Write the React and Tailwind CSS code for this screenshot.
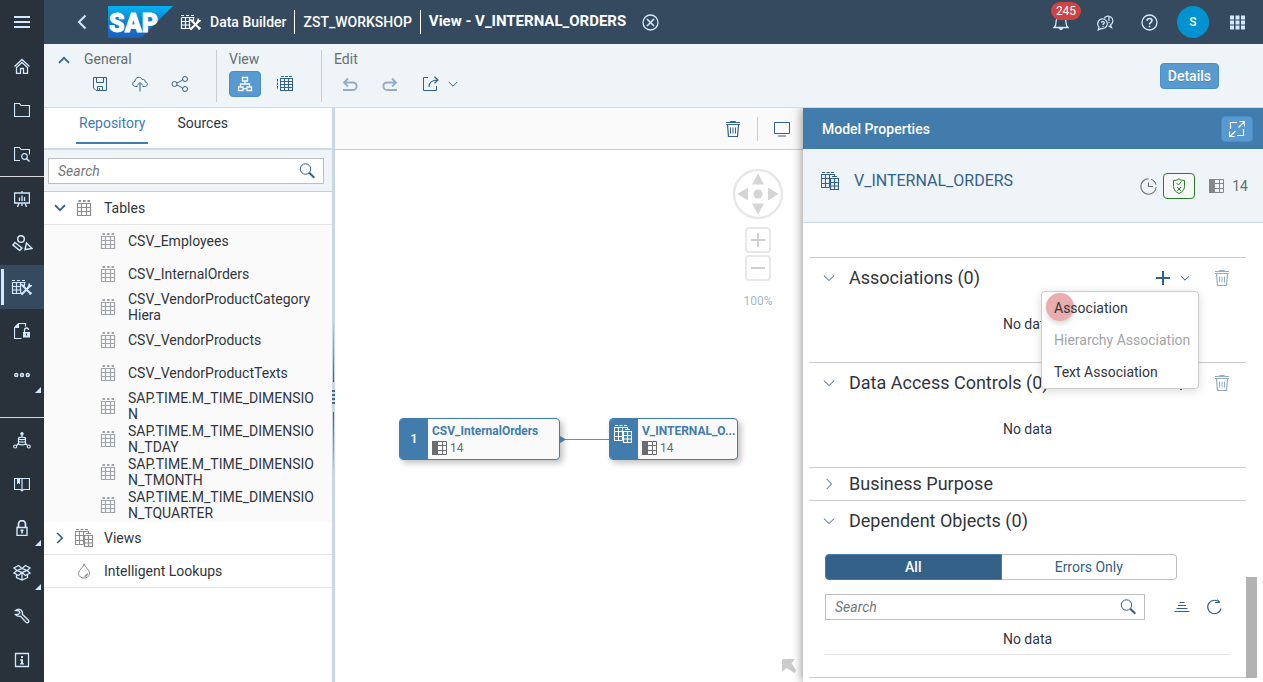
import { useState } from 'react';

function Icon({ w = 16, h = 16, className = '', children }) {
  return (
    <svg
      width={w}
      height={h}
      viewBox={`0 0 ${w} ${h}`}
      fill="none"
      stroke="currentColor"
      className={`shrink-0 ${className}`}
      aria-hidden="true"
    >
      {children}
    </svg>
  );
}

const MenuIcon = () => (
  <Icon>
    <path d="M0 3h16M0 8h16M0 13h16" strokeWidth="2" />
  </Icon>
);
const HomeIcon = () => (
  <Icon>
    <path d="M.5 8.500 8 1.500l7.500 7M2.500 9.500 8 4.500l5.500 5M2.500 9v6.500h4v-5h3v5h4V9" strokeWidth="1.300" />
  </Icon>
);
const FolderIcon = () => (
  <Icon>
    <path d="M.5 14.500v-13h5l1.500 2h8.500v11z" strokeWidth="1.200" />
  </Icon>
);
const FolderSearchIcon = () => (
  <Icon>
    <path d="M6 14.500H.500v-13h5l1.500 2h8.500v5" strokeWidth="1.200" />
    <circle cx="10.500" cy="10.500" r="2.800" strokeWidth="1.200" />
    <path d="m12.500 12.500 3 3" strokeWidth="1.500" />
  </Icon>
);
const BoardIcon = () => (
  <Icon>
    <path d="M.5 2h15v10H.500zM8 0v2.500M5 12l-1.500 4M11 12l1.500 4M8 12v3" strokeWidth="1.400" />
    <path d="M5.500 6.500V10M8 4.500V10M10.500 6v4" strokeWidth="1.300" />
  </Icon>
);
const ShapesIcon = () => (
  <Icon w={21} h={16}>
    <circle cx="9" cy="4" r="3.300" strokeWidth="1.500" />
    <path d="m3 7.500 7 5.500-2.200 2.500L1 10z" strokeWidth="1.500" />
    <path d="m14.500 8 5.500 5.500-7 1z" strokeWidth="1.500" />
  </Icon>
);
const BuilderIcon = () => (
  <Icon w={22} h={17}>
    <path d="M1 1.500h3M6 1.500h3M11 1.500h3M1.500 3.500h13M1.500 3.500v11h8M5.500 3.500v11M9.500 3.500v11M13.500 3.500V7M1.500 7.500H10M1.500 11h9" strokeWidth="1.200" />
    <path d="m11.500 6.500 8.500 8.500M10.500 15.500l9-9" strokeWidth="2" />
    <path d="M10 5.500 13 7M18.500 4.500l-1 3 3.500-1M9.500 13.500l2 2M18.500 15.500l2-2" strokeWidth="1.500" />
  </Icon>
);
const DocLockIcon = () => (
  <Icon>
    <path d="M7.500 15.500h-7V4.500l4-4h7v3M4.500.500v4h-4" strokeWidth="1.200" />
    <path d="M1 4 4 1v3z" fill="currentColor" />
    <path d="M9 9h7v5.500H9z" fill="currentColor" stroke="none" />
    <path d="M10.500 9V7a2 2 0 0 1 4 0" strokeWidth="1.300" />
    <path d="M12.500 10.500v2" className="stroke-[#29313a]" />
  </Icon>
);
const DotsIcon = () => (
  <Icon>
    <circle cx="2.200" cy="8" r="1.500" strokeWidth="1.500" />
    <circle cx="8" cy="8" r="1.500" strokeWidth="1.500" />
    <circle cx="13.800" cy="8" r="1.500" strokeWidth="1.500" />
  </Icon>
);
const DataNetIcon = () => (
  <Icon w={18} h={17}>
    <circle cx="9" cy="1.800" r="1.300" fill="currentColor" />
    <path d="M9 3v2M5.500 6.500c0-1.800 7-1.800 7 0v5c0 1.800-7 1.800-7 0zM5.500 6.500c0 1.500 7 1.500 7 0M5.500 9c0 1.500 7 1.500 7 0M5.500 11.500l-2 2M12.500 11.500l2 2" strokeWidth="1.200" />
    <circle cx="2.200" cy="14.500" r="1.500" strokeWidth="1.200" />
    <circle cx="15.800" cy="14.500" r="1.500" strokeWidth="1.200" />
  </Icon>
);
const BookIcon = () => (
  <Icon>
    <path d="M.5 2.500h15v11H9.500L8 15l-1.500-1.500h-6zM8 3v11" strokeWidth="1.200" />
    <path d="M3 3h3v5.500L4.500 7 3 8.500z" fill="currentColor" stroke="none" />
  </Icon>
);
const LockIcon = () => (
  <Icon>
    <path d="M3 7.500h10v8H3z" strokeWidth="1.400" />
    <path d="M4.500 7.500V4a3.500 3.500 0 0 1 7 0v3.500" strokeWidth="1.800" />
    <path d="M6.500 9.500h3v1.500l-.7.500v2h-1.600v-2l-.7-.5z" fill="currentColor" stroke="none" />
  </Icon>
);
const BoxIcon = () => (
  <Icon w={18} h={17}>
    <path
      d="M9 4.500 5.500 1.500 1 4l3 2.500zM9 4.500l3.500-3L17 4l-3 2.500zM4 6.500 1 9l4.500 2.500L9 8.500zM14 6.500 17 9l-4.500 2.500L9 8.500zM4 6.500l5-2 5 2-5 2zM3.500 10.500v3L9 16l5.500-2.500v-3M9 9v7"
      strokeWidth="1.300"
    />
  </Icon>
);
const WrenchIcon = () => (
  <Icon>
    <path
      d="M1.500 2.500c2-1.800 4.500-1.800 6 0 1 1.200 1.200 2.500.8 3.800l6.200 6c1 1.500-.8 3.200-2.200 2.200L6.500 8.200c-1.800.5-3.500 0-5-1.700l3-.3 1.300-1.500-1-2z"
      strokeWidth="1.400"
    />
  </Icon>
);
const InfoIcon = () => (
  <Icon>
    <path d="M1.500 1.500h13v13h-13z" strokeWidth="1.300" />
    <path d="M7 4h2v2H7zM6 7.200h3v4h1v1.300H6v-1.300h1V8.500H6z" fill="currentColor" stroke="none" />
  </Icon>
);
const ChevronLeft = () => (
  <Icon w={10} h={16}>
    <path d="M8.500 1.500 2 8l6.500 6.500" strokeWidth="2" />
  </Icon>
);
const Down = ({ className }) => (
  <Icon w={12} h={8} className={className}>
    <path d="m.8 1.500 5.200 5 5.200-5" />
  </Icon>
);
const DownBold = ({ className }) => (
  <Icon w={12} h={8} className={className}>
    <path d="m1 1.200 5 5 5-5" strokeWidth="1.700" />
  </Icon>
);
const DownSmall = ({ className }) => (
  <Icon w={10} h={7} className={className}>
    <path d="m.8 1 4.200 4.200L9.200 1" />
  </Icon>
);
const CloseCircle = () => (
  <Icon w={17} h={17}>
    <circle cx="8.500" cy="8.500" r="7.500" strokeWidth="1.300" />
    <path d="m5 5 7 7M12 5l-7 7" strokeWidth="1.600" />
  </Icon>
);
const BellIcon = () => (
  <Icon>
    <path d="M1 13.500c1.500-1 2-2.500 2-5C3 5 5 2.500 8 2.500s5 2.500 5 6c0 2.500.5 4 2 5z" strokeWidth="1.300" />
    <path d="M5.500 14h5L9 16H7z" fill="currentColor" stroke="none" />
  </Icon>
);
const FeedbackIcon = () => (
  <Icon w={17} h={17}>
    <path
      d="M7 4.500a4.700 4.700 0 1 1 6.500 6.300l1 2.700-3-1.800M6 5a4.800 4.800 0 1 1-1.800 9.400L1.200 16l.8-3A4.800 4.800 0 0 1 6 5z"
      strokeWidth="1.200"
    />
    <path d="M4.500 8.800c.2-1.800 3-1.600 2.800 0-.1 1-1.300 1-1.300 2.200M6 12v1M12 3v4M12 8v1" strokeWidth="1.300" />
  </Icon>
);
const HelpIcon = () => (
  <Icon w={17} h={17}>
    <circle cx="8.500" cy="8.500" r="7.500" strokeWidth="1.300" />
    <path d="M6 6.800c.1-3 5-3 5-.2 0 1.800-2.500 1.700-2.500 3.900M8.500 11.700v1.600" strokeWidth="1.700" />
  </Icon>
);
const AppsIcon = () => (
  <Icon w={15} h={15}>
    <path d="M0 2.500h15M0 7.500h15M0 12.500h15" strokeWidth="4" strokeDasharray="4 1.500" />
  </Icon>
);
const SaveIcon = () => (
  <Icon>
    <path d="M1.500 1.500h13v13H4l-2.500-2.500zM4.500 1.500v5h7v-5M5.500 14.500v-4h5v4M7.500 12v2.500" />
  </Icon>
);
const DeployIcon = () => (
  <Icon>
    <path d="M5.500 10.500H3.700C0 10.500-.2 5.800 3 5.300 3 .500 9 .200 10.200 3.500c2-.5 3 .8 2.800 2.200 3.200.3 3 4.800-.3 4.800h-2M8 15.500V7M5 9.500l3-3 3 3" />
  </Icon>
);
const ShareIcon = () => (
  <Icon w={18} h={16}>
    <circle cx="3.500" cy="8" r="2.500" />
    <circle cx="14" cy="3" r="2.500" />
    <circle cx="14" cy="13" r="2.500" />
    <path d="m6 7 5.500-2.800M6 9l5.500 2.800" />
  </Icon>
);
const DiagramIcon = () => (
  <Icon>
    <path d="M5.500 1.500h5v3.500h-5zM1.500 11h4.500v3.500H1.500zM10 11h4.500v3.500H10zM8 5v3M3.500 11V8h9v3M6 12.700h4" strokeWidth="1.300" />
  </Icon>
);
const DataViewIcon = () => (
  <Icon>
    <path d="M3.500 2.500v12M7.500 2.500v12M11.500 2.500v12M3 5.500h13M3 8.500h13M3 11.500h13M3 14.500h13M3 2.500h13M15.500 2.500v12M4 .500h3M8 .500h3M12 .500h3" />
    <path d="M.5 3v2.500M.5 6.500V9M.5 10v2.500" />
  </Icon>
);
const UndoIcon = () => (
  <Icon>
    <path d="M1 14h9.500c5.500 0 5.500-7.500 0-7.500H2M6 2.500 2 6.500l4 4" strokeWidth="1.800" />
  </Icon>
);
const RedoIcon = () => (
  <Icon>
    <path d="M15 14H5.500c-5.500 0-5.500-7.500 0-7.500H14M10 2.500l4 4-4 4" strokeWidth="1.800" />
  </Icon>
);
const ExportIcon = () => (
  <Icon w={18} h={16}>
    <path d="M6 1.500H1.500v13h13V10" />
    <path d="M7 11c0-4.500 2.500-7 9-7M12.500.800 16 4l-3.500 3.300" strokeWidth="1.200" />
  </Icon>
);
const SearchIcon = ({ className }) => (
  <Icon className={className}>
    <circle cx="6.500" cy="6" r="5.200" />
    <path d="m10.300 9.800 5 5" strokeWidth="2" />
  </Icon>
);
const TrashIcon = () => (
  <Icon>
    <path d="M5.500 1.500V.500h5v1M1 1.500h14M1 3.500h14" />
    <path d="m2.500 4 1 11.500h9l1-11.500" strokeWidth="1.200" />
    <path d="M5.500 6.500v6M8 6.500v6M10.500 6.500v6" />
  </Icon>
);
const MonitorIcon = () => (
  <Icon>
    <path d="M.5 1.500h15v11H.500zM4 15h8" />
  </Icon>
);
const TableIcon = () => (
  <Icon>
    <path d="M2.500 1h2.500M7 1h2.500M11.500 1h2.500" strokeWidth="2" />
    <path d="M1.500 3.500h13v12h-13zM5.500 3v12.500M10.500 3v12.500M1.500 7.500h13M1.500 11.500h13" strokeWidth="1.200" />
  </Icon>
);
const ViewIcon = () => (
  <Icon w={18} h={18}>
    <path d="M1 .500h3M5.500 .500h3M10 .500h3M8.500 15.500h-8v-13h13v1.500M4.500 2.500v13M8.500 2.500v13M.5 6.500h9M.5 11.500h8" strokeWidth="1.100" />
    <path d="M9.500 6.500h8v11h-8zM13.500 6.500v11M9.500 10.500h8M9.500 14h8M11 4.500h5" strokeWidth="1.200" />
  </Icon>
);
const DropIcon = () => (
  <Icon>
    <path d="M8 .8C8 4 2.500 7 2.500 10.500c0 6 11 6 11 0C13.500 6 9.500 5.500 8 .8z" />
    <path d="M12 10.500c-.3 2-1.500 3-3.500 3.300 1-1.800 1.700-3 3.500-3.300z" fill="currentColor" strokeWidth=".5" />
  </Icon>
);
const ClockIcon = () => (
  <Icon w={17} h={17}>
    <path d="M8.500.800a7.700 7.700 0 1 0 7.700 8.500M11 1.200a7.700 7.700 0 0 1 5 5.500" strokeWidth="1.100" />
    <path d="M8.500 4.500v4h4.500" strokeWidth="1.100" />
  </Icon>
);
const ShieldIcon = () => (
  <Icon w={14} h={16}>
    <path d="M1.500 2.500c2 0 4-.3 5.500-1.700 1.500 1.400 3.500 1.700 5.500 1.700v6c0 3.500-2.500 5.500-5.500 7-3-1.500-5.500-3.500-5.500-7z" />
    <path d="m4.500 5 2 2 3-3.500M5 9l4 4M9 9l-4 4" />
  </Icon>
);
const ColumnsIcon = () => (
  <Icon w={15} h={14}>
    <path d="M0 0h6v14H0z" fill="currentColor" stroke="none" />
    <path d="M6 .500h8.500v13H6M10.500 .500v13M6 4.500h8.500M6 9.500h8.500" />
  </Icon>
);
const ExpandIcon = () => (
  <Icon>
    <path d="M1.500 8V1.500H8M14.500 8v6.500H8M9.500 6.500l5.500-5.500M10.500.500h5v5M6.500 10 1 15.500M.5 10.500v5h5" strokeWidth="1.200" />
  </Icon>
);
const PlusIcon = () => (
  <Icon w={14} h={14}>
    <path d="M7 0v14M0 7h14" strokeWidth="2" />
  </Icon>
);
const SortIcon = () => (
  <Icon w={16} h={12}>
    <path d="M5.500 1.500h5M4 4.500h8M2.500 7.500h11M.5 10.500h15" />
  </Icon>
);
const RefreshIcon = () => (
  <Icon>
    <path d="M13.500 3.500A6.700 6.700 0 1 0 15 9.500" strokeWidth="1.200" />
    <path d="M9 3.500h4.700L11.500.500" />
  </Icon>
);

function SapLogo() {
  return (
    <svg width="65" height="32" viewBox="0 0 65 32" role="img" aria-label="SAP" className="shrink-0">
      <defs>
        <linearGradient id="sap" x1="0" y1="0" x2="0" y2="1">
          <stop offset="0" stopColor="#00b4f1" />
          <stop offset=".5" stopColor="#0c7fd2" />
          <stop offset="1" stopColor="#1f5fbb" />
        </linearGradient>
      </defs>
      <path d="M0 0h65L33 32H0z" fill="url(#sap)" />
      <text
        x="1"
        y="26"
        fontFamily="Roboto, sans-serif"
        fontWeight="900"
        fontSize="25"
        fill="#fff"
        stroke="#fff"
        strokeWidth=".8"
      >
        SAP
      </text>
    </svg>
  );
}

function NavItem({ label, icon, selected, more }) {
  return (
    <button
      aria-label={label}
      aria-current={selected ? 'page' : undefined}
      className={`relative flex h-11 w-full shrink-0 items-center justify-center ${selected ? 'bg-[#354a5f]' : ''}`}
    >
      {selected && <span className="absolute left-px top-1 h-9 w-[3px] bg-[#d1e8ff]" />}
      {icon}
      {more && (
        <svg width="6" height="6" viewBox="0 0 6 6" className="absolute bottom-1 right-[3px]" fill="currentColor" aria-hidden="true">
          <path d="M6 0v6H0z" />
        </svg>
      )}
    </button>
  );
}

function Sidebar() {
  return (
    <nav className="flex w-11 shrink-0 flex-col bg-[#29313a] text-[#d1e8ff]">
      <NavItem label="Menu" icon={<MenuIcon />} />
      <NavItem label="Home" icon={<HomeIcon />} />
      <NavItem label="Repository" icon={<FolderIcon />} />
      <NavItem label="Search" icon={<FolderSearchIcon />} />
      <hr className="w-full shrink-0 border-[#d9d9d9]" />
      <NavItem label="Analytics" icon={<BoardIcon />} />
      <NavItem label="Business Builder" icon={<ShapesIcon />} />
      <NavItem label="Data Builder" icon={<BuilderIcon />} selected />
      <NavItem label="Data Access" icon={<DocLockIcon />} />
      <NavItem label="More" icon={<DotsIcon />} more />
      <div className="flex-1" />
      <hr className="w-full shrink-0 border-[#d9d9d9]" />
      <NavItem label="Connections" icon={<DataNetIcon />} />
      <NavItem label="Catalog" icon={<BookIcon />} />
      <NavItem label="Security" icon={<LockIcon />} more />
      <NavItem label="Content" icon={<BoxIcon />} more />
      <NavItem label="Tools" icon={<WrenchIcon />} />
      <NavItem label="About" icon={<InfoIcon />} />
    </nav>
  );
}

function HeaderButton({ label, children }) {
  return (
    <button aria-label={label} className="relative flex h-11 w-11 items-center justify-center">
      {children}
    </button>
  );
}

function Header() {
  return (
    <header className="flex h-11 shrink-0 items-center bg-[#354a5f] pl-8 pr-1 text-[#d1e8ff]">
      <button aria-label="Back" className="mr-5 flex w-3 justify-center">
        <ChevronLeft />
      </button>
      <SapLogo />
      <div className="ml-[7px] flex items-center gap-2 text-sm text-white">
        <BuilderIcon />
        <a href="#builder" className="font-medium">Data Builder</a>
        <span className="h-6 w-px bg-white" />
        <a href="#space" className="font-medium">ZST_WORKSHOP</a>
        <span className="h-6 w-px bg-white" />
        <h1 className="text-[15px] font-bold">View - V_INTERNAL_ORDERS</h1>
      </div>
      <button aria-label="Close" className="ml-4">
        <CloseCircle />
      </button>
      <div className="ml-auto flex">
        <HeaderButton label="Notifications">
          <BellIcon />
          <span className="absolute left-3 top-0.5 flex h-[18px] w-[30px] items-center justify-center rounded-full bg-[#d04343] text-xs text-white">
            245
          </span>
        </HeaderButton>
        <HeaderButton label="Feedback"><FeedbackIcon /></HeaderButton>
        <HeaderButton label="Help"><HelpIcon /></HeaderButton>
        <HeaderButton label="Profile">
          <span className="flex h-8 w-8 items-center justify-center rounded-full bg-[#0092d1] text-xs font-medium text-white">S</span>
        </HeaderButton>
        <HeaderButton label="Apps"><AppsIcon /></HeaderButton>
      </div>
    </header>
  );
}

function ToolButton({ label, active, children }) {
  return (
    <button
      aria-label={label}
      className={`flex h-[26px] w-8 items-center justify-center rounded ${
        active ? 'border border-[#478fcc] bg-[#5899d0] text-white' : ''
      }`}
    >
      {children}
    </button>
  );
}

function ToolGroup({ title, className = '', children }) {
  return (
    <section className={`h-[52px] ${className}`}>
      <h2 className="pb-[3px] text-sm leading-[18px] text-[#6a6d70]">{title}</h2>
      <div className="flex gap-2">{children}</div>
    </section>
  );
}

function Toolbar() {
  return (
    <div className="flex h-16 shrink-0 border-b border-[#ccdbe9] bg-[#eff4f9] pt-1.5 text-[#346187]">
      <button aria-label="Collapse toolbar" className="ml-3.5 mr-3.5 flex h-5 w-3 items-center">
        <DownBold className="rotate-180" />
      </button>
      <ToolGroup title="General" className="border-r border-[#ccc] pr-5">
        <ToolButton label="Save"><SaveIcon /></ToolButton>
        <ToolButton label="Deploy"><DeployIcon /></ToolButton>
        <ToolButton label="Share"><ShareIcon /></ToolButton>
      </ToolGroup>
      <ToolGroup title="View" className="border-r border-[#ccc] pl-3 pr-5">
        <ToolButton label="Diagram" active><DiagramIcon /></ToolButton>
        <ToolButton label="Data"><DataViewIcon /></ToolButton>
      </ToolGroup>
      <ToolGroup title="Edit" className="pl-3">
        <ToolButton label="Undo"><span className="text-[#94adc4]"><UndoIcon /></span></ToolButton>
        <ToolButton label="Redo"><span className="text-[#94adc4]"><RedoIcon /></span></ToolButton>
        <button aria-label="Export" className="flex h-[26px] items-center gap-2 px-2">
          <ExportIcon />
          <DownSmall />
        </button>
      </ToolGroup>
      <button className="ml-auto mr-11 mt-[13px] h-[26px] rounded border border-[#478fcc] bg-[#5899d0] px-[7px] text-sm font-medium leading-5 text-white text-shadow-2xs">
        Details
      </button>
    </div>
  );
}

const tables = [
  'CSV_Employees',
  'CSV_InternalOrders',
  'CSV_VendorProductCategoryHiera',
  'CSV_VendorProducts',
  'CSV_VendorProductTexts',
  'SAP.TIME.M_TIME_DIMENSION',
  'SAP.TIME.M_TIME_DIMENSION_TDAY',
  'SAP.TIME.M_TIME_DIMENSION_TMONTH',
  'SAP.TIME.M_TIME_DIMENSION_TQUARTER',
];

function SearchBox({ id, className = '' }) {
  const [value, setValue] = useState('');
  return (
    <div className={`flex h-[26px] items-center border border-[#bfbfbf] bg-white pl-[9px] pr-2 ${className}`}>
      <input
        id={id}
        aria-label="Search"
        value={value}
        onChange={(e) => setValue(e.target.value)}
        placeholder="Search"
        className="h-6 min-w-0 flex-1 text-sm leading-6 outline-none placeholder:italic placeholder:text-[#74777a]"
      />
      <button aria-label="Run search" className="text-[#346187]">
        <SearchIcon />
      </button>
    </div>
  );
}

function TreeRow({ icon, children, chevron }) {
  return (
    <li className="flex h-[33px] items-center border-b border-[#e5e5e5] bg-white pl-2.5">
      <span className="flex w-5 items-center pr-2 text-[#346187]">{chevron}</span>
      <span className="flex w-5 justify-center text-[#8a8c8e]">{icon}</span>
      <span className="pl-2.5">{children}</span>
    </li>
  );
}

function LeftPanel() {
  return (
    <aside className="flex w-[288px] shrink-0 flex-col bg-white text-sm leading-4 text-[#32363a]">
      <div role="tablist" className="flex h-[42px] shrink-0 items-start gap-[26px] border-b-2 border-[#ccdbe9] pl-8">
        <button role="tab" aria-selected="true" className="h-9 border-b-2 border-[#427cac] px-[3px] pb-1 text-[#427cac]">
          Repository
        </button>
        <button role="tab" aria-selected="false" className="h-9 border-b-2 border-transparent px-[3px] pb-1">
          Sources
        </button>
      </div>
      <div className="border-b border-[#ccc] bg-[#eff4f9] pb-[7px] pl-1 pr-2 pt-2">
        <SearchBox id="repo-search" />
      </div>
      <ul>
        <TreeRow chevron={<DownBold />} icon={<TableIcon />}>Tables</TreeRow>
        {tables.map((name) => (
          <li key={name} className="flex h-[33px] items-center gap-3 bg-[#fafafa] pb-0.5 pl-14 pr-4">
            <span className="text-[#a0a4a8]"><TableIcon /></span>
            <span className="break-all">{name}</span>
          </li>
        ))}
        <TreeRow chevron={<DownBold className="-rotate-90" />} icon={<ViewIcon />}>Views</TreeRow>
        <TreeRow icon={<DropIcon />}>Intelligent Lookups</TreeRow>
      </ul>
    </aside>
  );
}

function Splitter() {
  return (
    <div role="separator" aria-orientation="vertical" className="flex w-[3px] shrink-0 flex-col items-center justify-center gap-2 bg-[#c8d8e8] pt-1">
      <span className="h-16 w-px bg-linear-to-b from-transparent to-[#346187]" />
      <span className="flex flex-col gap-0.5">
        <i className="h-0.5 w-[3px] bg-[#46688a]" />
        <i className="h-0.5 w-[3px] bg-[#46688a]" />
        <i className="h-0.5 w-[3px] bg-[#46688a]" />
        <i className="h-0.5 w-[3px] bg-[#46688a]" />
      </span>
      <span className="h-16 w-px bg-linear-to-t from-transparent to-[#346187]" />
    </div>
  );
}

function Node({ className, badge, name }) {
  return (
    <div className={`absolute flex h-[42px] overflow-hidden rounded border border-[#427cac] bg-[#fafafa] shadow-[3px_3px_6px_rgba(0,0,0,0.25)] ${className}`}>
      <div className="flex w-7 shrink-0 justify-center bg-[#427cac] text-[13px] font-medium text-white">{badge}</div>
      <div className="min-w-0 flex-1 pl-1 pt-1">
        <div className="truncate text-xs font-bold leading-4 text-[#427cac]">{name}</div>
        <div className="flex items-center gap-[3px] text-xs leading-[18px] text-[#6a6d70]">
          <ColumnsIcon />14
        </div>
      </div>
    </div>
  );
}

function Canvas() {
  return (
    <main className="flex min-w-0 flex-1 flex-col bg-white">
      <div className="flex h-[42px] shrink-0 items-center justify-end border-b border-[#ccc] bg-[#fafafa] pr-[13px] text-[#346187]">
        <button aria-label="Delete"><TrashIcon /></button>
        <span className="mx-4 h-6 w-px bg-[#ccc]" />
        <button aria-label="Fit to screen"><MonitorIcon /></button>
      </div>
      <div className="relative flex-1">
        <div className="absolute right-[19px] top-[18px] flex flex-col items-center">
          <svg width="52" height="52" viewBox="0 0 52 52" fill="#d5d5d5" role="img" aria-label="Pan">
            <circle cx="26" cy="26" r="24" fill="none" stroke="#e8e8e8" strokeWidth="2.500" />
            <circle cx="26" cy="26" r="4.500" />
            <path d="m26 5.500 6 11H20zM26 46.500l6-11H20zM5.500 26l10.500-6.500v13zM46.500 26 36 19.500v13z" />
          </svg>
          <button aria-label="Zoom in" className="mt-[7px] flex h-[26px] w-[26px] items-center justify-center rounded border-2 border-[#e8e8e8] text-[#d0d0d0]">
            <PlusIcon />
          </button>
          <button aria-label="Zoom out" className="mt-0.5 flex h-[26px] w-[26px] items-center justify-center rounded border-2 border-[#e8e8e8] text-[#d0d0d0]">
            <Icon w={14} h={14}><path d="M0 7h14" strokeWidth="2" /></Icon>
          </button>
          <span className="mt-3 text-xs text-[#a5b9cc]">100%</span>
        </div>
        <Node
          className="left-16 top-[268px] w-[161px]"
          badge={<span className="self-center">1</span>}
          name="CSV_InternalOrders"
        />
        <svg width="49" height="10" viewBox="0 0 49 10" className="absolute left-[225px] top-[284px]" aria-hidden="true">
          <path d="M0 5.500h49" stroke="#5b91bd" />
          <path d="M0 2v7l6-3.500z" fill="#427cac" />
        </svg>
        <Node
          className="left-[274px] top-[268px] w-[129px]"
          badge={<span className="pr-0.5 pt-1.5"><ViewIcon /></span>}
          name="V_INTERNAL_O..."
        />
        <svg width="15" height="15" viewBox="0 0 15 15" className="absolute bottom-2 right-1.5" fill="#ccc" aria-hidden="true">
          <path d="M0 0h13L9.500 4 14 11.500 12.500 14 4.500 9 0 13z" />
        </svg>
      </div>
    </main>
  );
}

function SectionHeader({ open, title, children, className = 'h-10' }) {
  return (
    <div className={`flex items-center pr-4 text-[#346187] ${className}`}>
      <button aria-expanded={open} className="flex items-center gap-3.5 pl-3.5 text-lg text-[#32363a]">
        <Down className={open ? 'text-[#346187]' : '-rotate-90 text-[#346187]'} />
        {title}
      </button>
      <div className="ml-auto flex items-center">{children}</div>
    </div>
  );
}

function AssociationMenu() {
  return (
    <ul
      role="menu"
      className="absolute -right-[9px] top-5 z-20 w-[158px] rounded border border-[#ccc] bg-white text-sm text-[#32363a] shadow-[0_2px_10px_rgba(0,0,0,0.15)]"
    >
      <li className="relative">
        <span className="absolute left-1 top-px h-7 w-7 rounded-full bg-[#e9adad] shadow-[0_3px_5px_rgba(0,0,0,0.15)]" />
        <button role="menuitem" className="relative h-8 w-full px-3 text-left">Association</button>
      </li>
      <li>
        <button role="menuitem" disabled className="h-8 w-full whitespace-nowrap px-3 text-left text-[#a3a5a7]">
          Hierarchy Association
        </button>
      </li>
      <li>
        <button role="menuitem" className="h-8 w-full px-3 text-left">Text Association</button>
      </li>
    </ul>
  );
}

function NoData() {
  return <p className="flex h-[52px] items-center justify-center">No data</p>;
}

function Properties() {
  return (
    <aside className="relative z-10 flex w-[460px] shrink-0 flex-col bg-white text-sm text-[#32363a] shadow-[0_0_10px_rgba(0,0,0,0.5)]">
      <div className="flex h-[41px] shrink-0 items-center justify-between bg-[#427cac] pl-[19px] pr-2.5 text-white">
        <h2 className="font-medium">Model Properties</h2>
        <button aria-label="Expand" className="flex h-[26px] w-8 items-center justify-center rounded border border-[#478fcc] bg-[#5899d0]">
          <ExpandIcon />
        </button>
      </div>
      <div className="flex h-[74px] shrink-0 items-start border-b border-[#ccdbe9] bg-[#eff4f9] pl-[18px] pr-[15px] pt-5 text-[#346187]">
        <span className="pt-[3px]"><ViewIcon /></span>
        <h3 className="ml-[15px] text-base">V_INTERNAL_ORDERS</h3>
        <div className="ml-auto flex items-center pt-1 text-[#6a6d70]">
          <ClockIcon />
          <button aria-label="Validation status" className="ml-1.5 flex h-[26px] w-8 items-center justify-center rounded border border-[#2b7c2b] bg-[#f7f7f7] text-[#2b7c2b]">
            <ShieldIcon />
          </button>
          <span className="ml-3.5 mr-2 text-[#858789]"><ColumnsIcon /></span>
          14
        </div>
      </div>
      <div className="flex min-h-0 flex-1 pb-1 pl-1.5 pr-1.5">
        <div className="min-w-0 flex-1 pt-[34px]">
          <section className="h-[105px] border-t border-[#ccc]">
            <SectionHeader open title="Associations (0)">
              <div className="relative flex items-center gap-2.5">
                <button aria-label="Add association"><PlusIcon /></button>
                <button aria-label="More association types"><DownSmall /></button>
                <AssociationMenu />
              </div>
              <button aria-label="Delete association" disabled className="ml-6 text-[#94adc4]"><TrashIcon /></button>
            </SectionHeader>
            <NoData />
          </section>
          <section className="h-[105px] border-t border-[#ccc]">
            <SectionHeader open title="Data Access Controls (0)">
              <button aria-label="Add data access control" className="mr-[26px]"><PlusIcon /></button>
              <button aria-label="Delete data access control" disabled className="text-[#94adc4]"><TrashIcon /></button>
            </SectionHeader>
            <NoData />
          </section>
          <section className="border-t border-[#ccc]">
            <SectionHeader title="Business Purpose" className="h-8" />
          </section>
          <section className="border-y border-[#ccc] pb-[22px]">
            <SectionHeader open title="Dependent Objects (0)" />
            <div className="px-4 pt-[13px]">
              <div className="flex h-[26px] w-[352px]">
                <button className="flex-1 rounded-l border border-[#427cac] bg-[#346187] font-medium text-white">All</button>
                <button className="flex-1 rounded-r border border-l-0 border-[#bfbfbf] text-[#346187]">Errors Only</button>
              </div>
              <div className="mt-3.5 flex items-center text-[#346187]">
                <SearchBox id="dependent-search" className="w-[320px]" />
                <button aria-label="Sort" className="ml-auto"><SortIcon /></button>
                <button aria-label="Refresh" className="ml-4 mr-2"><RefreshIcon /></button>
              </div>
              <p className="flex h-[35px] items-center justify-center border-b border-[#e5e5e5] pt-1">No data</p>
            </div>
          </section>
        </div>
        <div className="flex w-[11px] flex-col justify-end">
          <div className="h-[101px] bg-[#b2b2b2]" />
        </div>
      </div>
    </aside>
  );
}

export default function App() {
  return (
    <div className="flex h-screen overflow-hidden font-[Roboto,sans-serif]">
      <Sidebar />
      <div className="flex min-w-0 flex-1 flex-col">
        <Header />
        <Toolbar />
        <div className="flex min-h-0 flex-1 overflow-hidden">
          <LeftPanel />
          <Splitter />
          <Canvas />
          <Properties />
        </div>
      </div>
    </div>
  );
}
